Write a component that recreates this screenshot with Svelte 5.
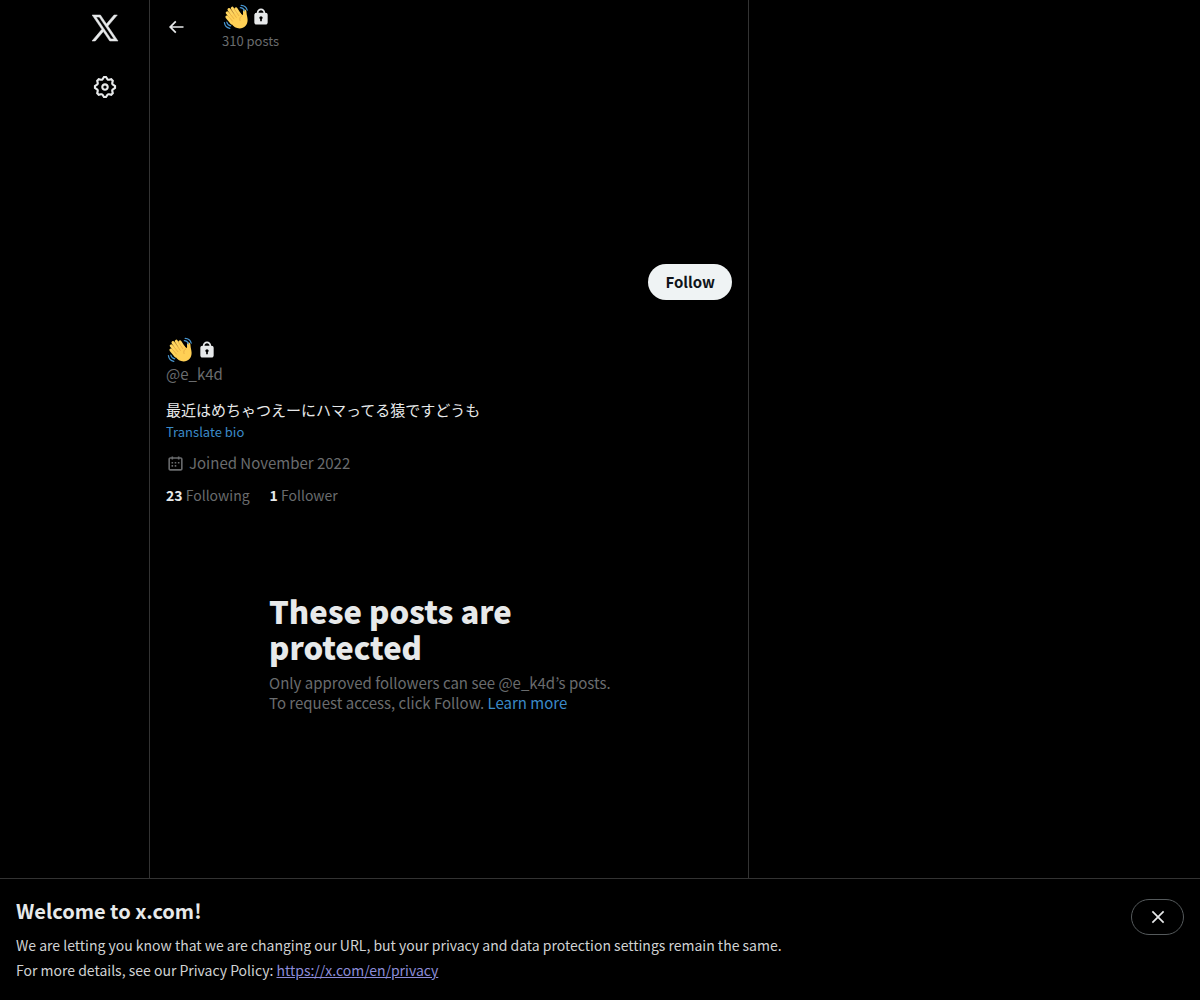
<script>
  const name = "e_k4d";
  const posts = 310;

  const stats = [
    { count: 23, label: "Following" },
    { count: 1, label: "Follower" },
  ];

  let showBanner = true;
  let following = false;
</script>

<style>
  :global(body) {
    background: #000;
  }

  .page {
    display: flex;
    flex-direction: column;
    min-height: 100vh;
    color: #e7e9ea;
    font-family: "Noto Sans CJK JP", "Noto Sans", sans-serif;
    font-size: 15px;
    line-height: 20px;
  }

  h1, h2, p {
    margin: 0;
  }

  a {
    color: inherit;
    text-decoration: none;
  }

  button {
    display: flex;
    align-items: center;
    justify-content: center;
    border: 0;
    padding: 0;
    background: none;
    color: inherit;
    font: inherit;
    cursor: pointer;
  }

  svg {
    display: block;
    fill: currentColor;
  }

  .columns {
    display: grid;
    grid-template-columns: 149px minmax(0, 600px) 1fr;
    flex-grow: 1;
  }

  nav {
    display: flex;
    flex-direction: column;
    align-items: flex-end;
    gap: 30px;
    padding: 12px 28px 0 0;
  }

  nav a {
    display: flex;
    justify-content: center;
    width: 32px;
  }

  .logo {
    width: 32px;
    height: 32px;
    stroke: currentColor;
    stroke-width: 0.4;
  }

  .gear {
    width: 26px;
    height: 26px;
  }

  main {
    border: solid #333;
    border-width: 0 1px;
  }

  header {
    display: flex;
    align-items: center;
    gap: 36px;
    height: 54px;
    padding: 0 16px;
  }

  header svg.arrow {
    width: 20px;
    height: 20px;
  }

  .name {
    display: flex;
    align-items: center;
    gap: 3px;
    height: 28px;
  }

  header .name {
    gap: 1px;
  }

  .wave {
    width: 28px;
    height: 28px;
  }

  .lock {
    width: 20px;
    height: 20px;
  }

  .posts, .translate {
    font-size: 13px;
  }

  .posts, .handle, .joined, .stats, .protected p {
    color: #6a6c6e;
  }

  .cover {
    height: 198px;
  }

  .profile {
    padding: 12px 16px 0;
  }

  .actions {
    display: flex;
    justify-content: flex-end;
    height: 72px;
  }

  .follow {
    height: 36px;
    border-radius: 18px;
    padding: 0 17px;
    background: #eff3f4;
    color: #0f1419;
    font-weight: 700;
  }

  .bio {
    margin-top: 16px;
  }

  .translate {
    margin-top: 2px;
  }

  .protected .link, .link {
    color: #3b8ac8;
  }

  .joined {
    display: flex;
    align-items: center;
    gap: 4px;
    margin-top: 11px;
  }

  .joined svg {
    width: 19px;
    height: 19px;
  }

  .stats {
    display: flex;
    gap: 20px;
    margin-top: 12px;
    font-size: 14px;
  }

  .stats strong {
    color: #e7e9ea;
  }

  .protected {
    max-width: 360px;
    margin: 88px auto 0;
  }

  .protected h2 {
    margin-bottom: 8px;
    font-size: 31px;
    font-weight: 900;
    line-height: 36px;
  }

  .banner {
    display: flex;
    align-items: flex-start;
    justify-content: space-between;
    border-top: 1px solid #333;
    padding: 20px 16px 17px;
  }

  .banner h2 {
    margin-bottom: 10px;
    font-size: 20px;
    line-height: 24px;
  }

  .banner p {
    color: #d0d2d3;
    font-size: 14px;
    line-height: 25px;
  }

  .banner a {
    color: #8c8cd8;
    text-decoration: underline;
  }

  .close {
    width: 53px;
    height: 36px;
    border: 1px solid #555a5c;
    border-radius: 18px;
  }

  .close svg {
    width: 20px;
    height: 20px;
  }
</style>

{#snippet displayName()}
  <svg class="wave" viewBox="0 0 28 28" role="img" aria-label="Waving hand">
    <path fill="none" stroke="#ffd55e" stroke-width="3" stroke-linecap="round" d="M5.200 9.800l6 7M7 6.500l6.500 9M10.300 5.200l5.700 8.800M14 5.800l4.500 7M4.900 14l5 6" />
    <path fill="#ffd055" d="M7 12.500l11.300-2.800c1.300 1.600 1.900 2.400 2.400 2.200.6-.3.300-1.500.3-3.100 0-1.400.6-2.400 1.600-2.400 1.400 0 1.900 1.300 1.900 3.100.1 2.400 1 4.400 1.100 7.300.2 5-3.300 8.700-8 8.700-3.600 0-6-1.900-8-4.700z" />
    <path fill="none" stroke="#dc9a3c" stroke-width=".6" stroke-linecap="round" d="M6.700 9.200l5.200 6.600M8.900 6.600l5.400 7.800M12.300 6l4.500 6.700M5.900 12.900l4.600 5.200M20 12.600c-2 1.200-2.800 3-2 5" />
    <path fill="none" stroke="#4795cf" stroke-width="1.200" stroke-linecap="round" d="M18.300 4.700c2.100.1 3.500 1.300 4 3.200M19.200 2.400c3.500.1 5.200 1.600 6 4.800M4.800 19.200c.5 2 1.800 3.300 3.900 3.700M2.400 19.600c.5 3.300 2.300 5.200 5.400 5.700" />
  </svg>
  <svg class="lock" viewBox="0 0 24 24" role="img" aria-label="Protected account">
    <path d="M17.5 7H17v-.25c0-2.76-2.24-5-5-5s-5 2.240-5 5V7h-.5C5.120 7 4 8.120 4 9.500v9C4 19.880 5.120 21 6.500 21h11c1.390 0 2.500-1.120 2.500-2.500v-9C20 8.120 18.890 7 17.500 7zM13 14.730V17h-2v-2.270c-.59-.34-1-.99-1-1.730 0-1.100.9-2 2-2 1.110 0 2 .9 2 2 0 .74-.4 1.390-1 1.730zM15 7H9v-.25c0-1.660 1.350-3 3-3 1.660 0 3 1.340 3 3V7z" />
  </svg>
{/snippet}

<div class="page">
  <div class="columns">
    <nav>
      <a href="/" aria-label="X">
        <svg class="logo" viewBox="0 0 24 24">
          <path d="M21.742 21.75l-7.563-11.179 7.056-8.321h-2.456l-5.691 6.714-4.540-6.714H2.359l7.290 10.776L2.250 21.750h2.456l6.035-7.118 4.818 7.118h6.191zM7.739 3.818L18.810 20.182h-2.447L5.290 3.818h2.447z" />
        </svg>
      </a>
      <a href="/settings" aria-label="Settings">
        <svg class="gear" viewBox="0 0 24 24">
          <path d="M10.54 1.75h2.920l1.570 2.360c.11.17.32.25.53.21l2.530-.59 2.170 2.170-.58 2.540c-.05.2.04.41.21.53l2.360 1.570v2.920l-2.360 1.570c-.17.12-.26.33-.21.53l.58 2.540-2.170 2.170-2.530-.59c-.21-.04-.42.04-.53.21l-1.570 2.360h-2.920l-1.580-2.360c-.11-.17-.32-.25-.52-.21l-2.540.59-2.170-2.170.58-2.540c.05-.2-.03-.41-.21-.53l-2.350-1.570v-2.920L4.100 8.970c.18-.12.26-.33.21-.53L3.730 5.900 5.900 3.730l2.540.59c.2.04.41-.04.52-.21l1.580-2.360zm1.070 2l-.98 1.470C10.050 6.080 9 6.500 7.990 6.270l-1.460-.34-.6.6.33 1.460c.24 1.010-.18 2.070-1.050 2.640l-1.460.98v.78l1.460.98c.87.57 1.290 1.630 1.050 2.640l-.33 1.460.6.6 1.460-.34c1.010-.23 2.060.19 2.640 1.050l.98 1.470h.78l.97-1.470c.58-.86 1.630-1.280 2.650-1.050l1.450.34.61-.6-.34-1.460c-.23-1.010.18-2.070 1.050-2.640l1.470-.98v-.78l-1.470-.98c-.87-.57-1.280-1.630-1.050-2.640l.34-1.460-.61-.6-1.450.34c-1.020.23-2.070-.19-2.650-1.050l-.97-1.470h-.78zM12 10.500c-.83 0-1.500.67-1.500 1.500s.67 1.500 1.500 1.500c.83 0 1.500-.67 1.500-1.500s-.67-1.500-1.500-1.500zM8.500 12c0-1.930 1.560-3.500 3.500-3.500 1.930 0 3.500 1.570 3.500 3.500s-1.570 3.500-3.500 3.500c-1.940 0-3.500-1.570-3.500-3.500z" />
        </svg>
      </a>
    </nav>

    <main>
      <header>
        <button aria-label="Back">
          <svg class="arrow" viewBox="0 0 24 24">
            <path d="M7.414 13l5.043 5.040-1.414 1.420L3.586 12l7.457-7.460 1.414 1.420L7.414 11H21v2H7.414z" />
          </svg>
        </button>
        <div>
          <h2 class="name">{@render displayName()}</h2>
          <p class="posts">{posts} posts</p>
        </div>
      </header>

      <div class="cover"></div>

      <section class="profile">
        <div class="actions">
          <button class="follow" on:click={() => following = !following}>
            {following ? "Following" : "Follow"}
          </button>
        </div>
        <h1 class="name">{@render displayName()}</h1>
        <p class="handle">@{name}</p>
        <p class="bio" lang="ja">最近はめちゃつえーにハマってる猿ですどうも</p>
        <button class="translate link">Translate bio</button>
        <p class="joined">
          <svg viewBox="0 0 24 24" aria-hidden="true">
            <path d="M7 4V3h2v1h6V3h2v1h1.500C19.890 4 21 5.120 21 6.500v12c0 1.380-1.110 2.500-2.500 2.500h-13C4.120 21 3 19.880 3 18.500v-12C3 5.120 4.120 4 5.500 4H7zm0 2H5.500c-.27 0-.5.22-.5.5v12c0 .28.23.5.5.5h13c.28 0 .5-.22.5-.5v-12c0-.28-.22-.5-.5-.5H17v1h-2V6H9v1H7V6zm0 6h2v-2H7v2zm0 4h2v-2H7v2zm4-4h2v-2h-2v2zm0 4h2v-2h-2v2zm4-4h2v-2h-2v2z" />
          </svg>
          Joined November 2022
        </p>
        <div class="stats">
          {#each stats as stat}
            <a href="/{name}/{stat.label.toLowerCase()}"><strong>{stat.count}</strong> {stat.label}</a>
          {/each}
        </div>
      </section>

      <section class="protected">
        <h2>These posts are protected</h2>
        <p>
          Only approved followers can see @{name}’s posts. To request access, click Follow.
          <a class="link" href="/help">Learn more</a>
        </p>
      </section>
    </main>
  </div>

  {#if showBanner}
    <aside class="banner">
      <div>
        <h2>Welcome to x.com!</h2>
        <p>We are letting you know that we are changing our URL, but your privacy and data protection settings remain the same.</p>
        <p>For more details, see our Privacy Policy: <a href="https://x.com/en/privacy">https://x.com/en/privacy</a></p>
      </div>
      <button class="close" aria-label="Close" on:click={() => showBanner = false}>
        <svg viewBox="0 0 24 24">
          <path d="M10.590 12L4.540 5.960l1.420-1.420L12 10.590l6.040-6.050 1.420 1.420L13.410 12l6.050 6.040-1.420 1.420L12 13.410l-6.040 6.050-1.420-1.420L10.590 12z" />
        </svg>
      </button>
    </aside>
  {/if}
</div>
